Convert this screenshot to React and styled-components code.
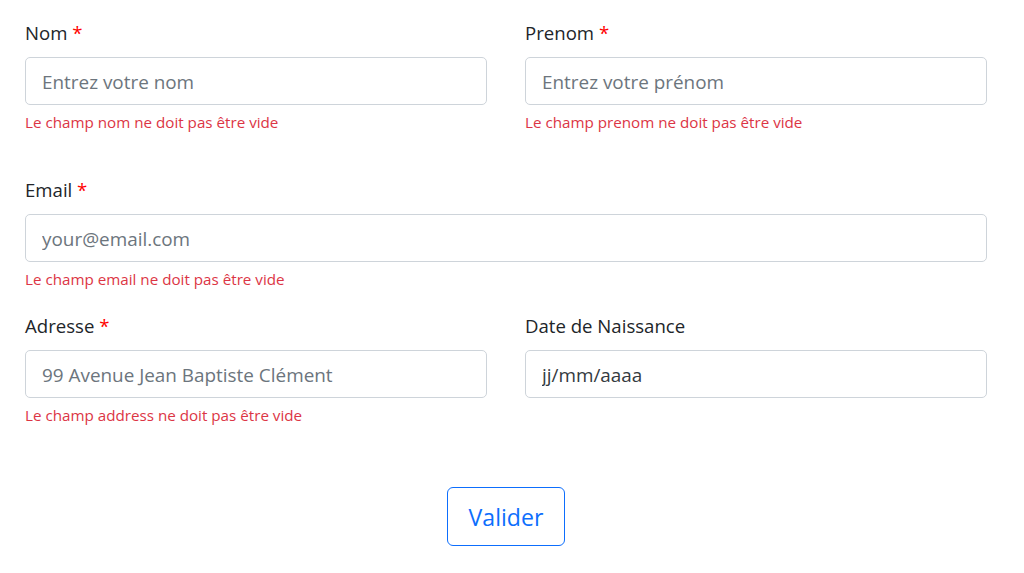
import React from "react";
import styled, { createGlobalStyle } from "styled-components";

const GlobalStyle = createGlobalStyle`
  html, body { margin: 0; padding: 0; background: #fff; }
  body {
    font-family: "Open Sans", "Noto Sans", sans-serif;
    color: #212529;
  }
  * { box-sizing: border-box; }
`;

const Form = styled.form`
  width: 1024px;
  padding: 18px 37px 0 25px;
`;

const Row = styled.div`
  display: grid;
  grid-template-columns: ${(p) => (p.$single ? "1fr" : "1fr 1fr")};
  column-gap: 38px;
  margin-bottom: ${(p) => p.$mb}px;
`;

const Field = styled.div`
  display: flex;
  flex-direction: column;
`;

const Label = styled.label`
  font-size: 18.6px;
  line-height: 30px;
  margin-bottom: 9px;
  color: #212529;
`;

const Star = styled.span`
  color: #f00;
`;

const Input = styled.input`
  height: 48px;
  width: 100%;
  padding: 2px 16px 0;
  font-family: inherit;
  font-size: 18.9px;
  color: #343a40;
  border: 1px solid #ced4da;
  border-radius: 5px;
  background: #fff;
  outline: none;
  &::placeholder { color: #6c757d; opacity: 1; }
`;

const Error = styled.div`
  margin-top: 6px;
  font-size: 15.2px;
  line-height: 22px;
  color: #dc3545;
  min-height: 22px;
`;

const Actions = styled.div`
  display: flex;
  justify-content: center;
`;

const Button = styled.button`
  height: 59px;
  padding: 1px 21px 0;
  font-family: inherit;
  font-size: 23.1px;
  color: #0d6efd;
  background: #fff;
  border: 1px solid #0d6efd;
  border-radius: 6px;
  cursor: pointer;
`;

function FormField({ label, required, placeholder, value, error }) {
  return (
    <Field>
      <Label>
        {label}
        {required && <> <Star>*</Star></>}
      </Label>
      {value !== undefined ? (
        <Input type="text" defaultValue={value} />
      ) : (
        <Input type="text" placeholder={placeholder} />
      )}
      {error !== undefined && <Error>{error}</Error>}
    </Field>
  );
}

export default function App() {
  return (
    <>
      <GlobalStyle />
      <Form onSubmit={(e) => e.preventDefault()}>
        <Row $mb={42}>
          <FormField label="Nom" required placeholder="Entrez votre nom" error="Le champ nom ne doit pas être vide" />
          <FormField label="Prenom" required placeholder="Entrez votre prénom" error="Le champ prenom ne doit pas être vide" />
        </Row>
        <Row $single $mb={21}>
          <FormField label="Email" required placeholder="your@email.com" error="Le champ email ne doit pas être vide" />
        </Row>
        <Row $mb={61}>
          <FormField label="Adresse" required placeholder="99 Avenue Jean Baptiste Clément" error="Le champ address ne doit pas être vide" />
          <FormField label="Date de Naissance" value="jj/mm/aaaa" />
        </Row>
        <Actions>
          <Button type="submit">Valider</Button>
        </Actions>
      </Form>
    </>
  );
}
